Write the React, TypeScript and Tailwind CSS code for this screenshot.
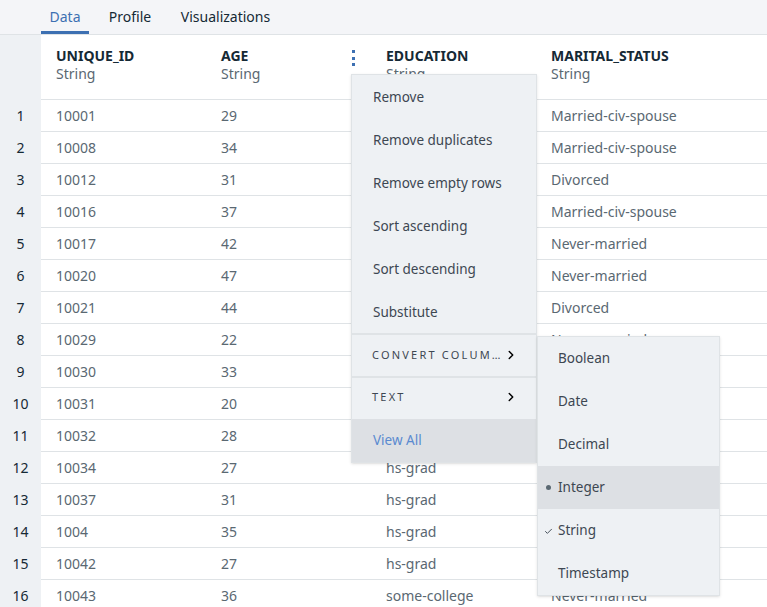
import { ChevronRight, Check } from 'lucide-react';

// --- Data ---
const columns = [
  { name: 'UNIQUE_ID', type: 'String' },
  { name: 'AGE', type: 'String' },
  { name: 'EDUCATION', type: 'String' },
  { name: 'MARITAL_STATUS', type: 'String' },
];

const rows: string[][] = [
  ['10001', '29', 'bachelors', 'Married-civ-spouse'],
  ['10008', '34', 'hs-grad', 'Married-civ-spouse'],
  ['10012', '31', 'hs-grad', 'Divorced'],
  ['10016', '37', 'some-college', 'Married-civ-spouse'],
  ['10017', '42', 'hs-grad', 'Never-married'],
  ['10020', '47', 'masters', 'Never-married'],
  ['10021', '44', 'hs-grad', 'Divorced'],
  ['10029', '22', 'some-college', 'Never-married'],
  ['10030', '33', 'hs-grad', 'Never-married'],
  ['10031', '20', 'some-college', 'Never-married'],
  ['10032', '28', 'bachelors', 'Never-married'],
  ['10034', '27', 'hs-grad', 'Never-married'],
  ['10037', '31', 'hs-grad', 'Never-married'],
  ['1004', '35', 'hs-grad', 'Divorced'],
  ['10042', '27', 'hs-grad', 'Never-married'],
  ['10043', '36', 'some-college', 'Never-married'],
];

const actions = ['Remove', 'Remove duplicates', 'Remove empty rows', 'Sort ascending', 'Sort descending', 'Substitute'];
const types = ['Boolean', 'Date', 'Decimal', 'Integer', 'String', 'Timestamp'];

function Tabs() {
  return (
    <div className="h-[35px] flex gap-[10px] pl-[41px] bg-[#f4f5f8] border-b border-[#dfe3e6] text-[14px]">
      <div className="w-[48px] flex items-center justify-center text-[#3d70b2] border-b-[3px] border-[#3d70b2] pt-[2px]">Data</div>
      <div className="w-[62px] flex items-center justify-center text-[#152935] pb-[1px]">Profile</div>
      <div className="w-[109px] flex items-center justify-center text-[#152935] pb-[1px]">Visualizations</div>
    </div>
  );
}

function Kebab() {
  return (
    <div className="absolute left-[146px] top-[15px] flex flex-col gap-[3.5px]">
      <span className="w-[3px] h-[3px] bg-[#3d70b2]" />
      <span className="w-[3px] h-[3px] bg-[#3d70b2]" />
      <span className="w-[3px] h-[3px] bg-[#3d70b2]" />
    </div>
  );
}

function ColumnMenu() {
  return (
    <div className="absolute left-[351px] top-[74px] w-[186px] bg-[#eef1f4] border border-[#dfe3e6] shadow-sm text-[13.5px] text-[#3d4752]">
      {actions.map((a) => (
        <div key={a} className="h-[43px] flex items-center pl-[21px] pt-px">{a}</div>
      ))}
      <div className="h-[43px] flex items-center pl-[20px] pr-[18px] border-t-2 border-[#dfe3e6] text-[11px] tracking-[0.2em] pb-[1px]">
        <span className="truncate w-[130px]">CONVERT COLUMN</span>
        <ChevronRight className="ml-auto w-[14px] h-[14px] text-black" strokeWidth={2.5} />
      </div>
      <div className="h-[43px] flex items-center pl-[20px] pr-[18px] border-t-2 border-[#dfe3e6] text-[11px] tracking-[0.2em] pb-[3px]">
        <span>TEXT</span>
        <ChevronRight className="ml-auto w-[14px] h-[14px] text-black" strokeWidth={2.5} />
      </div>
      <div className="h-[43px] flex items-center pl-[21px] pb-[1px] bg-[#dde0e4] text-[#5a8ad0]">View All</div>
    </div>
  );
}

function TypeMenu() {
  return (
    <div className="absolute left-[537px] top-[336px] w-[183px] bg-[#eef1f4] border border-[#dfe3e6] shadow-sm text-[13.5px] text-[#3d4752]">
      {types.map((t) => (
        <div key={t} className={`h-[43px] flex items-center pl-[20px] pb-px relative ${t === 'Integer' ? 'bg-[#dde0e4]' : ''}`}>
          {t === 'Integer' && <span className="absolute left-[8px] w-[5px] h-[5px] rounded-full bg-[#5a6872]" />}
          {t === 'String' && <Check className="absolute left-[6px] top-[18px] w-[9px] h-[9px] text-[#3d4752]" strokeWidth={2.5} />}
          {t}
        </div>
      ))}
    </div>
  );
}

export default function App() {
  return (
    <div className="relative w-[767px] h-[607px] overflow-hidden bg-white font-['Noto_Sans',sans-serif]">
      <Tabs />
      <div className="flex">
        <div className="w-[41px] shrink-0 bg-[#eef1f4]">
          <div className="h-[65px]" />
          {rows.map((_, i) => (
            <div key={i} className="h-[32px] flex items-center justify-center text-[14px] text-[#152935] pb-px">{i + 1}</div>
          ))}
        </div>
        <div className="flex-1">
          <div className="h-[65px] flex border-b border-[#dfe3e6]">
            {columns.map((c, i) => (
              <div key={c.name} className="relative w-[165px] shrink-0 pl-[15px] pt-[12px]">
                <div className="text-[14px] font-bold text-[#152935] leading-[18px]">{c.name}</div>
                <div className="text-[14px] text-[#5a6872] leading-[18px]">{c.type}</div>
                {i === 1 && <Kebab />}
              </div>
            ))}
          </div>
          {rows.map((r, i) => (
            <div key={i} className="h-[32px] flex items-center border-b border-[#dfe3e6]">
              {r.map((v, j) => (
                <div key={j} className="w-[165px] shrink-0 pl-[15px] text-[14px] text-[#5a6872]">{v}</div>
              ))}
            </div>
          ))}
        </div>
      </div>
      <ColumnMenu />
      <TypeMenu />
    </div>
  );
}
